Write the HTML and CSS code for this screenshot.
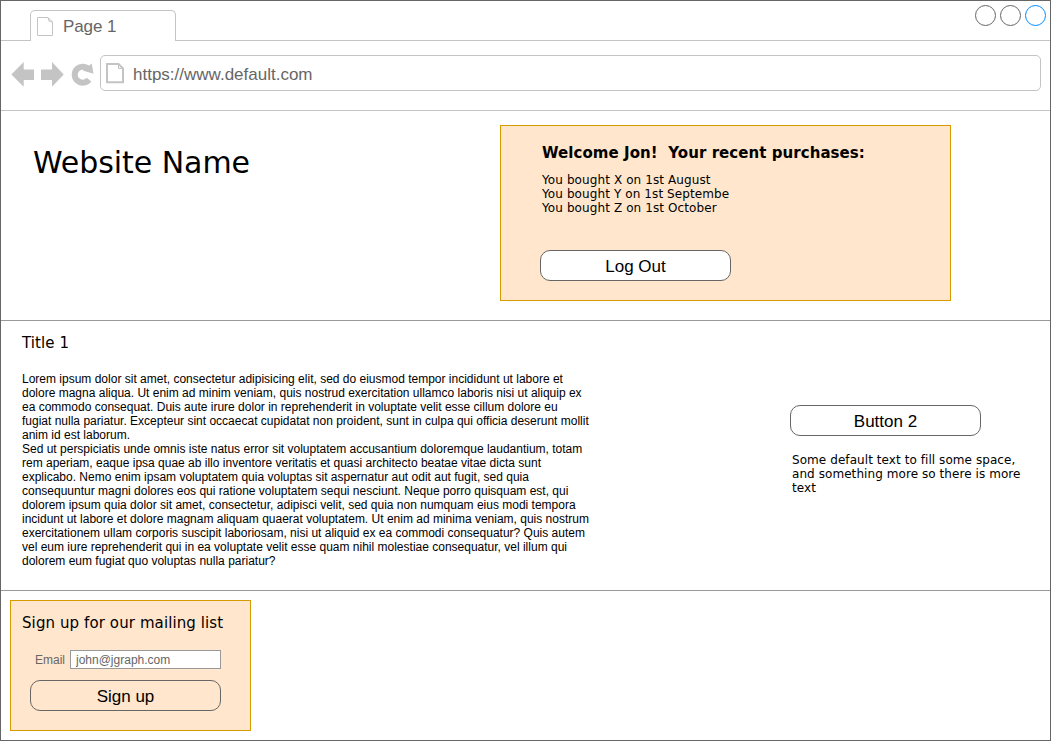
FILE: index.html
```html
<!DOCTYPE html>
<html lang="en">
<head>
<meta charset="utf-8">
<title>Website Name</title>
<link rel="stylesheet" href="styles.css">
</head>
<body>
<div class="window">
  <header class="tabbar">
    <div class="tab">
      <svg class="tab-icon" width="18" height="21" viewBox="0 0 18 21"><path d="M1.500 1.500h10.500l4.500 4.500v13.500h-15zM12 1.500l1 3.500 3.500 1"/></svg>
      <span>Page 1</span>
    </div>
    <div class="controls"><i class="dot"></i><i class="dot"></i><i class="dot dot-blue"></i></div>
  </header>
  <div class="toolbar">
    <svg class="nav" width="84" height="30" viewBox="0 0 84 30">
      <path d="M.4 14.500 12.700 2v7.500H23V20H12.700v6.700zM52.700 14.500 41 2v7.500H30V20h11v6.700z"/>
      <path class="reload" d="M78 19.600A8 8 0 1 1 78 9.700"/>
      <path d="M80.700 3.500 82.500 13.700 71.700 10.500z"/>
    </svg>
    <div class="address">
      <svg class="page-icon" width="19" height="22" viewBox="0 0 19 22"><path class="sheet" d="M1 2h11.500l4.500 4.500v13.800H1z"/><path d="M12.500 2v4.500H17"/></svg>
      <span class="url">https://www.default.com</span>
    </div>
  </div>
  <section class="hero">
    <h1 class="site-name">Website Name</h1>
    <div class="panel welcome">
      <h2 class="welcome-title">Welcome Jon!&nbsp; Your recent purchases:</h2>
      <p class="purchases">You bought X on 1st August<br>You bought Y on 1st Septembe<br>You bought Z on 1st October</p>
      <button class="button">Log Out</button>
    </div>
  </section>
  <section class="content">
    <div class="article">
      <h3 class="title">Title 1</h3>
      <p class="body-text">Lorem ipsum dolor sit amet, consectetur adipisicing elit, sed do eiusmod tempor incididunt ut labore et<br>dolore magna aliqua. Ut enim ad minim veniam, quis nostrud exercitation ullamco laboris nisi ut aliquip ex<br>ea commodo consequat. Duis aute irure dolor in reprehenderit in voluptate velit esse cillum dolore eu<br>fugiat nulla pariatur. Excepteur sint occaecat cupidatat non proident, sunt in culpa qui officia deserunt mollit<br>anim id est laborum.<br>Sed ut perspiciatis unde omnis iste natus error sit voluptatem accusantium doloremque laudantium, totam<br>rem aperiam, eaque ipsa quae ab illo inventore veritatis et quasi architecto beatae vitae dicta sunt<br>explicabo. Nemo enim ipsam voluptatem quia voluptas sit aspernatur aut odit aut fugit, sed quia<br>consequuntur magni dolores eos qui ratione voluptatem sequi nesciunt. Neque porro quisquam est, qui<br>dolorem ipsum quia dolor sit amet, consectetur, adipisci velit, sed quia non numquam eius modi tempora<br>incidunt ut labore et dolore magnam aliquam quaerat voluptatem. Ut enim ad minima veniam, quis nostrum<br>exercitationem ullam corporis suscipit laboriosam, nisi ut aliquid ex ea commodi consequatur? Quis autem<br>vel eum iure reprehenderit qui in ea voluptate velit esse quam nihil molestiae consequatur, vel illum qui<br>dolorem eum fugiat quo voluptas nulla pariatur?</p>
    </div>
    <aside class="side">
      <button class="button">Button 2</button>
      <p class="side-text">Some default text to fill some space,<br>and something more so there is more<br>text</p>
    </aside>
  </section>
  <footer class="footer">
    <form class="panel signup">
      <h3 class="title">Sign up for our mailing list</h3>
      <div class="field"><label for="email">Email</label><input id="email" value="john@jgraph.com"></div>
      <button class="button button-clear" type="button">Sign up</button>
    </form>
  </footer>
</div>
</body>
</html>
```
FILE: styles.css
```css
* { box-sizing: border-box; margin: 0; }
body { font: 12px/14px "Liberation Sans", Arial, sans-serif; color: #000; background: #fff; }
svg { display: block; flex: none; fill: none; }
.window { width: 1051px; height: 741px; border: 1px solid #666; display: flex; flex-direction: column; overflow: hidden; }
.tabbar { height: 40px; flex: none; padding: 9px 4px 0 29px; display: flex; justify-content: space-between; border-bottom: 1px solid #c4c4c4; }
.tab { width: 146px; height: 31px; border: 1px solid #c4c4c4; border-bottom: 0; border-radius: 5px 5px 0 0; background: #fff; display: flex; align-items: flex-start; padding: 5px 0 0 5px; gap: 9px; font-size: 17px; line-height: 22px; letter-spacing: -0.1px; color: #666; }
.tab-icon { stroke: #c4c4c4; }
.controls { display: flex; gap: 4px; margin-top: -5px; }
.dot { width: 21px; height: 21px; border: 1px solid #666; border-radius: 50%; }
.dot-blue { border-color: #008cff; }
.toolbar { height: 70px; flex: none; border-bottom: 1px solid #c4c4c4; display: flex; padding: 14px 9px 0 10px; gap: 5px; }
.nav { fill: #c4c4c4; margin-top: 5px; }
.reload { fill: none; stroke: #c4c4c4; stroke-width: 6; }
.address { flex: 1; height: 36px; border: 1px solid #c4c4c4; border-radius: 5px; display: flex; align-items: center; padding-left: 5px; gap: 8px; font-size: 17px; line-height: 20px; color: #666; }
.url { padding-top: 3px; }
.page-icon { stroke: #c4c4c4; }
.sheet { stroke-width: 2; }
.hero { height: 210px; flex: none; border-bottom: 1px solid #999; display: flex; justify-content: space-between; padding: 14px 99px 0 32px; }
.site-name { font: 30px/36px "DejaVu Sans", Verdana, sans-serif; letter-spacing: -0.05px; margin-top: 20px; white-space: nowrap; }
.panel { background: #ffe6cc; border: 1px solid #d79b00; }
.welcome { width: 451px; height: 176px; padding: 17px 0 0 39px; }
.welcome-title { font: bold 15px/20px "DejaVu Sans", Verdana, sans-serif; letter-spacing: 0.06px; padding-left: 2px; white-space: nowrap; }
.purchases { font: 12px/14px "DejaVu Sans", Verdana, sans-serif; letter-spacing: 0.1px; padding-left: 2px; margin: 10px 0 35px; }
.button { display: block; width: 191px; height: 31px; border: 1px solid #666; border-radius: 10px; background: #fff; font: 17px/20px "Liberation Sans", Arial, sans-serif; color: #000; padding: 2px 0 0; }
.button-clear { background: transparent; }
.content { height: 270px; flex: none; border-bottom: 1px solid #999; display: flex; justify-content: space-between; padding-left: 21px; }
.title { font: 15px/20px "DejaVu Sans", Verdana, sans-serif; letter-spacing: 0.1px; white-space: nowrap; }
.article { padding-top: 12px; }
.body-text { margin-top: 19px; white-space: nowrap; }
.side { width: 260px; padding-top: 84px; }
.side-text { font: 12px/14px "DejaVu Sans", Verdana, sans-serif; letter-spacing: 0.07px; margin: 17px 0 0 2px; white-space: nowrap; }
.footer { padding: 9px; }
.signup { width: 241px; height: 131px; padding: 12px 0 0 11px; }
.signup .button { margin: 11px 0 0 8px; }
.field { display: flex; align-items: center; margin: 17px 0 0 13px; color: #666; }
.field label { width: 35px; }
.field input { width: 151px; height: 19px; border: 1px solid #999; border-radius: 0; background: #fff; padding: 0 5px; font: 12px/14px "Liberation Sans", Arial, sans-serif; color: #666; }
```
